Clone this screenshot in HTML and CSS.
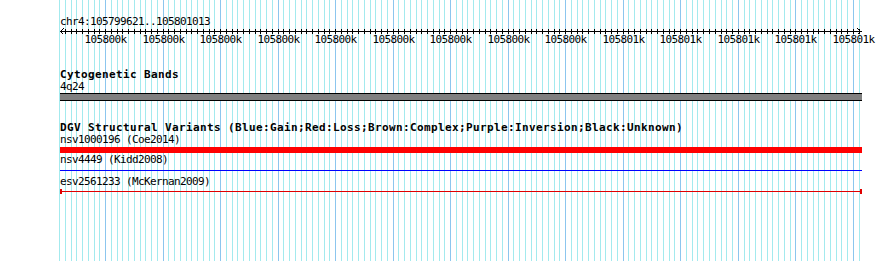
FILE: index.html
```html
<!DOCTYPE html>
<html>
<head>
    <title>Track Details</title>
    <link rel="stylesheet" href="styles.css">
</head>
<body>

    <div class="panel" id="panel" data-start="105799621" data-end="105801013">
        <svg class="grid" id="grid" width="802" height="261"></svg>

        <div class="content">
            <div class="ref">chr4:105799621..105801013</div>
            <svg class="scale" id="scale" width="802" height="17"></svg>

            <div class="track cyto">
                <h2 class="track-title">Cytogenetic Bands</h2>
                <div class="feature-label">4q24</div>
                <div class="band"></div>
            </div>

            <div class="track dgv">
                <h2 class="track-title">DGV Structural Variants (Blue:Gain;Red:Loss;Brown:Complex;Purple:Inversion;Black:Unknown)</h2>

                <div class="feature-label">nsv1000196 (Coe2014)</div>
                <div class="variant thick loss"></div>

                <div class="feature-label">nsv4449 (Kidd2008)</div>
                <div class="variant thin gain"></div>

                <div class="feature-label">esv2561233 (McKernan2009)</div>
                <div class="variant capped loss">
                    <span class="cap"></span>
                    <span class="stem"></span>
                    <span class="cap"></span>
                </div>
            </div>
        </div>
    </div>

    <script src="script.js"></script>
</body>
</html>
```

FILE: styles.css
```css
body {
    margin: 0;
    background-color: #fff;
    overflow: hidden;
    font-family: "DejaVu Sans Mono", "Liberation Mono", monospace;
    color: #000;
}

.panel {
    position: relative;
    width: 802px;
    height: 261px;
    margin-left: 60px;
}

.grid {
    position: absolute;
    top: 0;
    left: 0;
    overflow: visible;
    shape-rendering: crispEdges;
}

.grid .minor {
    fill: #a3eaee;
}

.grid .major {
    fill: #8cc6ee;
}

.content {
    position: relative;
}

.ref, .feature-label {
    font-size: 11px;
    letter-spacing: -0.622px;
    line-height: 11px;
    white-space: nowrap;
}

.ref {
    padding-top: 16px;
}

.scale {
    display: block;
    margin-top: 1px;
    overflow: visible;
    shape-rendering: crispEdges;
}

.scale .axis {
    fill: #000;
}

.scale .arrow {
    fill: none;
    stroke: #000;
    stroke-width: 1;
}

.scale-label {
    font-family: "DejaVu Sans Mono", "Liberation Mono", monospace;
    font-size: 11px;
    letter-spacing: -0.622px;
    fill: #000;
}

.track-title {
    margin: 0;
    font-size: 11px;
    font-weight: bold;
    letter-spacing: 0.378px;
    line-height: 13px;
    white-space: nowrap;
}

.cyto {
    margin-top: 23px;
}

.band {
    height: 6px;
    margin-top: 1px;
    background-color: #808080;
    border-top: 1px solid #000;
    border-bottom: 1px solid #000;
}

.dgv {
    margin-top: 20px;
}

.variant.thick {
    height: 6px;
    margin: 2px 0 1px;
}

.variant.thin {
    height: 1px;
    margin: 5px 0 5px;
}

.variant.loss.thick {
    background-color: #ff0000;
}

.variant.gain {
    background-color: #0000ff;
}

.variant.capped {
    display: flex;
    align-items: center;
    height: 5px;
    margin-top: 2px;
}

.capped .cap {
    width: 2px;
    height: 5px;
    background-color: #e00000;
}

.capped .stem {
    flex: 1;
    height: 1px;
    background-color: #e00000;
}
```

FILE: script.js
```js
const panel = document.getElementById("panel");
const START = parseInt(panel.dataset.start);
const END = parseInt(panel.dataset.end);
const WIDTH = 802;
const SCALE = 0.5752;
const SVG_NS = "http://www.w3.org/2000/svg";

function toX(pos) {
    return Math.round((pos - START) * SCALE - 0.4);
}

function make(name, attrs) {
    const node = document.createElementNS(SVG_NS, name);
    for (const key in attrs) {
        node.setAttribute(key, attrs[key]);
    }
    return node;
}

function drawGrid() {
    const grid = document.getElementById("grid");
    for (let pos = Math.floor(START / 10) * 10; pos <= END; pos += 10) {
        grid.appendChild(make("rect", {
            x: toX(pos),
            y: 0,
            width: 1,
            height: 261,
            class: pos % 100 === 0 ? "major" : "minor"
        }));
    }
}

function drawScale() {
    const scale = document.getElementById("scale");
    scale.appendChild(make("rect", { x: 0, y: 3, width: WIDTH, height: 1, class: "axis" }));
    scale.appendChild(make("polyline", { points: "3.5,0.5 0.5,3.5 3.5,6.5", class: "arrow" }));
    scale.appendChild(make("polyline", { points: "797.5,0.5 800.5,3.5 797.5,6.5", class: "arrow" }));

    for (let pos = Math.ceil(START / 10) * 10; pos <= END; pos += 10) {
        const x = toX(pos);
        if (x < 2 || x > WIDTH - 3) continue;
        scale.appendChild(make("rect", { x: x, y: 1, width: 1, height: 5, class: "axis" }));

        if (pos % 100 === 0) {
            const label = make("text", { x: x + 0.5, y: 15, "text-anchor": "middle", class: "scale-label" });
            label.textContent = Math.ceil(pos / 1000 - 0.5) + "k";
            scale.appendChild(label);
        }
    }
}

drawGrid();
drawScale();
```
